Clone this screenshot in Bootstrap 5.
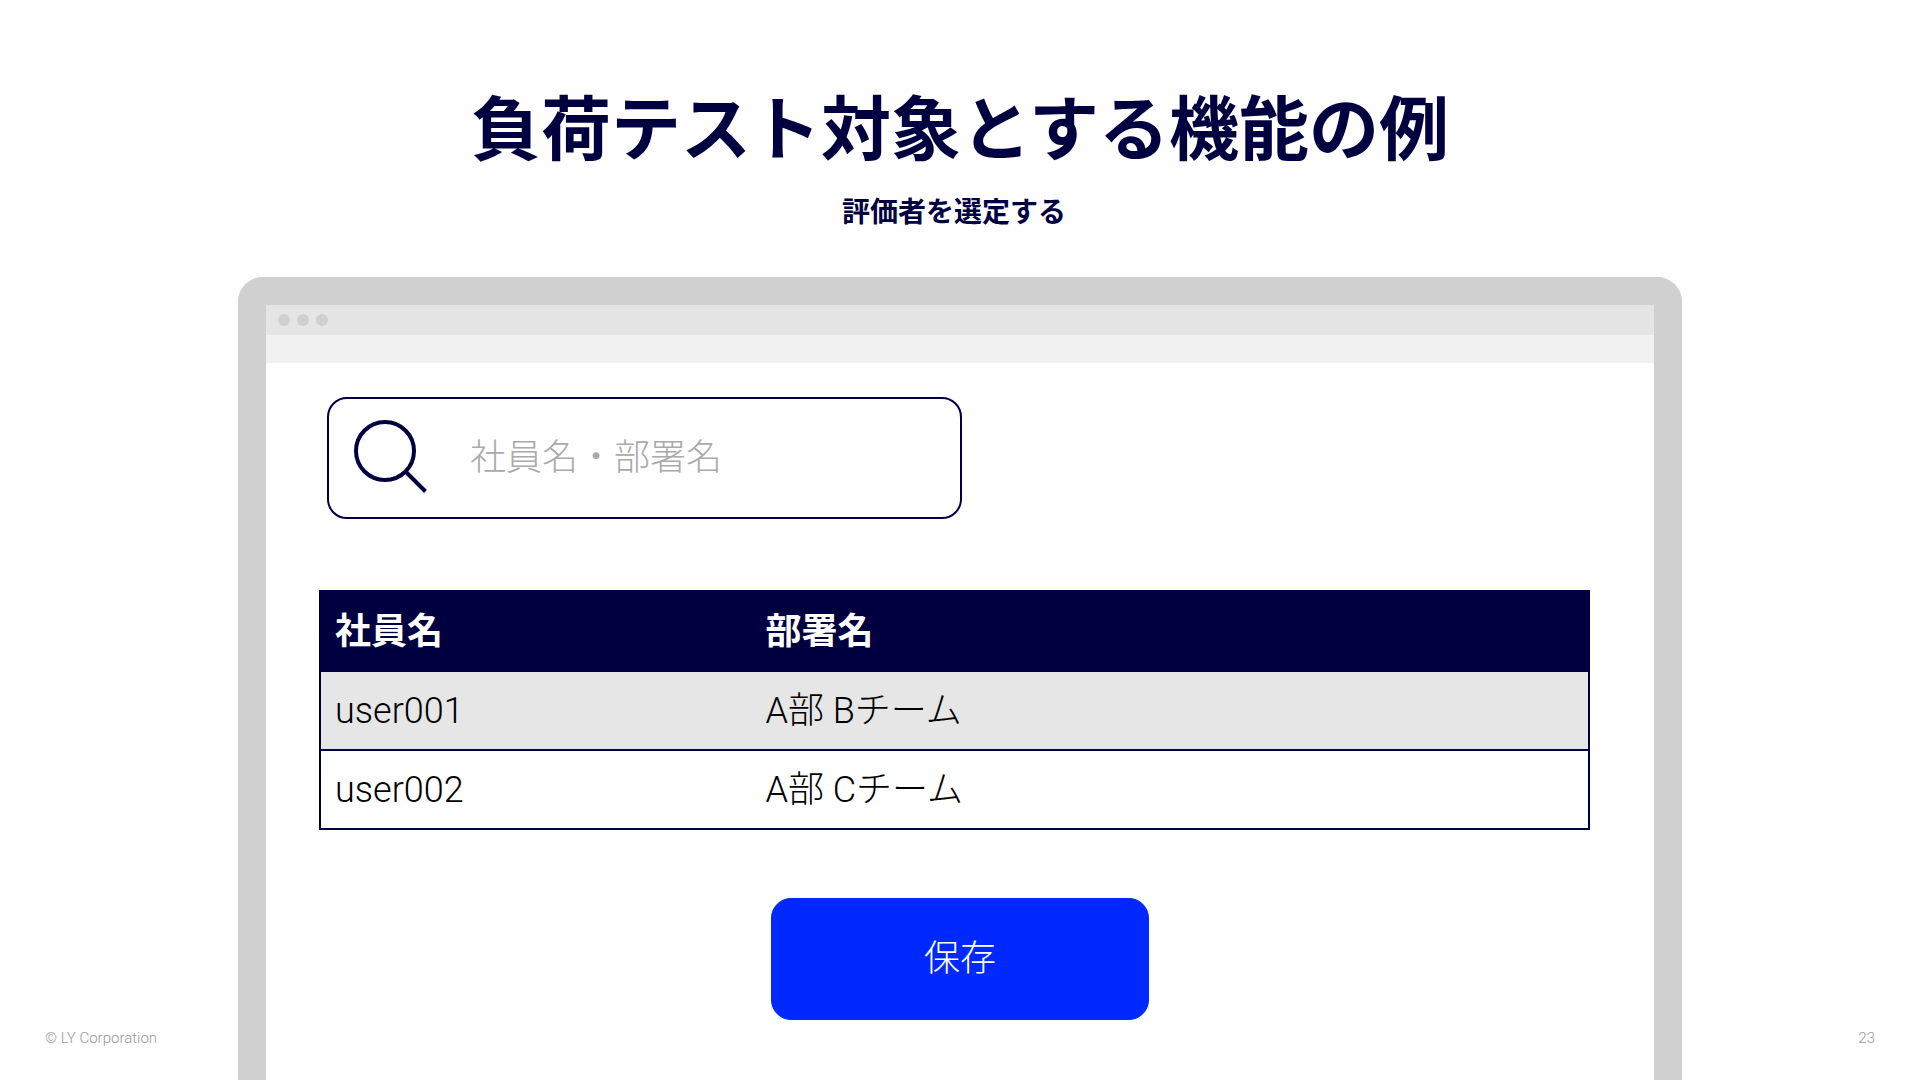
<!DOCTYPE html>
<html lang="ja">
<head>
<meta charset="utf-8">
<meta name="viewport" content="width=device-width, initial-scale=1">
<title>負荷テスト対象とする機能の例</title>
<link rel="stylesheet" href="https://cdn.jsdelivr.net/npm/bootstrap@5.3.0/dist/css/bootstrap.min.css">
<style>
  :root { --navy: #000040; --frame: #d0d0d0; }
  body { font-family: Roboto, "Noto Sans CJK JP", sans-serif; font-weight: 300; color: #000; background: #fefefe; }
  .slide-head { color: var(--navy); padding: 89px 0 44px; }
  .slide-title { font-size: 70px; line-height: 84px; margin-bottom: 20px; }
  .slide-sub { font-size: 28px; line-height: 40px; padding-right: 12px; }
  .side-note { flex: 0 0 238px; font-size: 15px; line-height: 20px; color: #999; padding: 0 45px 32px; }
  .browser { border: 28px solid var(--frame); border-bottom: 0; border-radius: 25px 25px 0 0; min-width: 0; }
  .bar-top { height: 30px; background: #e5e5e5; padding-left: 12px; gap: 7px; }
  .dot { width: 12px; height: 12px; background: var(--frame); }
  .bar-url { height: 28px; background: #f1f1f1; }
  .screen { background: #fff; padding-top: 34px; }
  .inset-area { padding: 0 64px 0 53px; }
  .search { height: 122px; max-width: 635px; border: 2px solid var(--navy); border-radius: 20px; padding: 0 25px; gap: 42px; }
  .search input, .search input:focus { font-size: 36px; line-height: 54px; font-weight: 300; background: none; }
  .search input::placeholder { color: #aaa; opacity: 1; }
  .members { margin: 71px 0 68px; border: 2px solid var(--navy); table-layout: fixed; font-size: 36px; line-height: 44px; --bs-table-color: #000; }
  .members th, .members td { height: 79px; padding: 0 14px; border-bottom: 2px solid var(--navy); vertical-align: middle; }
  .members th { height: 80px; padding-top: 2px; background: var(--navy); color: #fff; }
  .members .odd-row td { background: #e6e6e6; }
  .members .col-name { width: 34%; }
  .btn-save { width: 378px; height: 122px; border-radius: 20px; font-size: 36px; font-weight: 300;
    --bs-btn-bg: #0028ff; --bs-btn-border-color: #0028ff; --bs-btn-hover-bg: #001fd0; }
</style>
<script src="https://cdn.jsdelivr.net/npm/bootstrap@5.3.0/dist/js/bootstrap.bundle.min.js"></script>
</head>
<body class="d-flex flex-column min-vh-100">
  <header class="slide-head text-center">
    <h1 class="slide-title fw-bold">負荷テスト対象とする機能の例</h1>
    <p class="slide-sub fw-bold mb-0">評価者を選定する</p>
  </header>
  <div class="d-flex flex-grow-1">
    <div class="side-note d-flex align-items-end text-nowrap">© LY Corporation</div>
    <main class="browser flex-grow-1 d-flex flex-column">
      <div class="bar-top d-flex align-items-center">
        <span class="dot rounded-circle"></span>
        <span class="dot rounded-circle"></span>
        <span class="dot rounded-circle"></span>
      </div>
      <div class="bar-url"></div>
      <div class="screen flex-grow-1">
        <div class="inset-area">
          <form class="search d-flex align-items-center ms-2" role="search">
            <label for="member-search" class="d-flex flex-shrink-0">
              <svg width="74" height="76" viewBox="0 0 74 76" fill="none" stroke="#000040" stroke-width="4" aria-hidden="true">
                <circle cx="31" cy="31" r="29"/>
                <path d="M51.500 51.500 L71.500 71.500"/>
              </svg>
            </label>
            <input id="member-search" type="search" class="form-control border-0 shadow-none p-0" placeholder="社員名・部署名" aria-label="社員名・部署名">
          </form>
          <table class="table members">
            <thead>
              <tr><th scope="col" class="col-name">社員名</th><th scope="col">部署名</th></tr>
            </thead>
            <tbody>
              <tr class="odd-row"><td>user001</td><td>A部 Bチーム</td></tr>
              <tr><td>user002</td><td>A部 Cチーム</td></tr>
            </tbody>
          </table>
        </div>
        <div class="text-center">
          <button type="button" class="btn btn-primary btn-save">保存</button>
        </div>
      </div>
    </main>
    <div class="side-note d-flex align-items-end justify-content-end">23</div>
  </div>
</body>
</html>
